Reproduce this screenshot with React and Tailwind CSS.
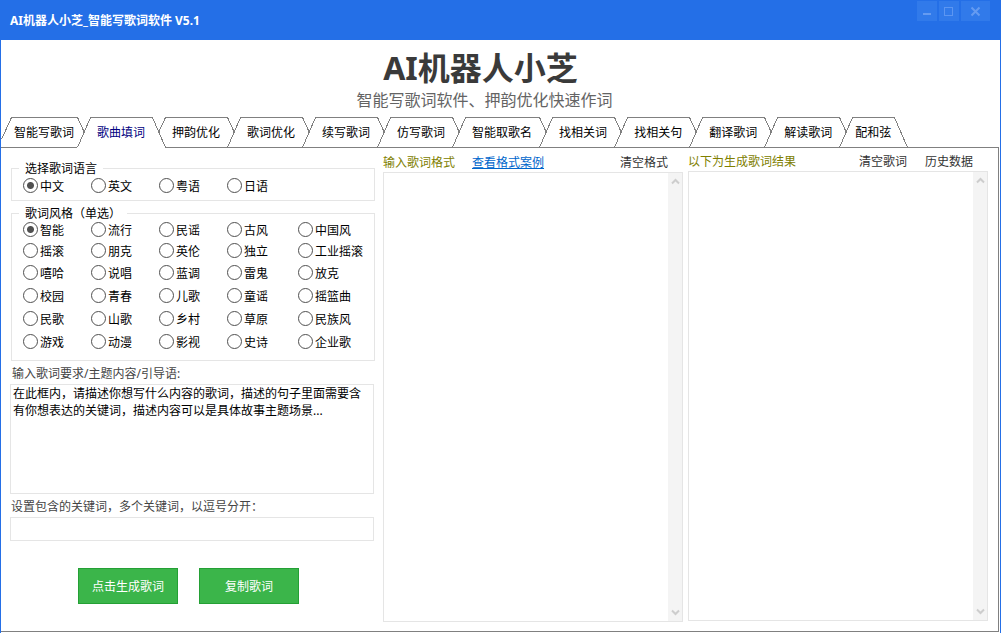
import { useState } from 'react';

// pad is the space between a tab's slopes and its label
const TABS = [
  { label: '智能写歌词', pad: 'px-[3px]' },
  { label: '歌曲填词', pad: 'px-[7px]' },
  { label: '押韵优化', pad: 'px-[7px]' },
  { label: '歌词优化', pad: 'px-[7px]' },
  { label: '续写歌词', pad: 'px-[7px]' },
  { label: '仿写歌词', pad: 'px-[7px]' },
  { label: '智能取歌名', pad: 'px-[7px]' },
  { label: '找相关词', pad: 'px-[7px]' },
  { label: '找相关句', pad: 'px-[7px]' },
  { label: '翻译歌词', pad: 'px-[7px]' },
  { label: '解读歌词', pad: 'px-[7px]' },
  { label: '配和弦', pad: 'px-[3px]' },
];

const LANGUAGES = ['中文', '英文', '粤语', '日语'];

const STYLES = [
  '智能', '流行', '民谣', '古风', '中国风',
  '摇滚', '朋克', '英伦', '独立', '工业摇滚',
  '嘻哈', '说唱', '蓝调', '雷鬼', '放克',
  '校园', '青春', '儿歌', '童谣', '摇篮曲',
  '民歌', '山歌', '乡村', '草原', '民族风',
  '游戏', '动漫', '影视', '史诗', '企业歌',
];

// Slopes between two neighbouring tabs. The tab in front keeps its full edge.
const Joint = ({ kind }) => {
  const paths = {
    start: 'M10.5 0.5 L0.5 22.5 M0 30.5 H11',
    left: 'M13.5 0.5 L0.5 30.5 M0.5 0.5 L7 14.5 M0 30.5 H13',
    selectedLeft: 'M13.5 0.5 L0.5 30.5 M0.5 0.5 L7 14.5',
    selectedRight: 'M0.5 0.5 L13.5 30.5 M13.5 0.5 L7 14.5',
    end: 'M0.5 0.5 L13.5 30.5 M0 30.5 H13',
  };
  return (
    <svg
      aria-hidden="true"
      className={kind === 'start' ? 'w-[10px] h-[31px] shrink-0 overflow-visible' : 'w-[13px] h-[31px] shrink-0 overflow-visible'}
      fill="none"
      stroke="#808080"
      shapeRendering="crispEdges"
    >
      <path d={paths[kind]} />
    </svg>
  );
};

const TabStrip = ({ active, onChange }) => {
  const jointAfter = (i) => {
    if (i === TABS.length - 1) return 'end';
    if (i === active) return 'selectedRight';
    if (i + 1 === active) return 'selectedLeft';
    return 'left';
  };

  return (
    <nav className="flex h-[31px]">
      <Joint kind="start" />
      {TABS.map((t, i) => (
        <div key={t.label} className="flex shrink-0">
          <button
            onClick={() => onChange(i)}
            className={`border-y border-t-[#808080] whitespace-nowrap ${t.pad} ${
              i === active ? 'text-[#000080] border-b-white' : 'text-black border-b-[#808080]'
            }`}
          >
            {t.label}
          </button>
          <Joint kind={jointAfter(i)} />
        </div>
      ))}
      <div className="flex-1 border-b border-[#808080] mr-px" />
    </nav>
  );
};

const Radio = ({ name, value, checked, onChange }) => (
  <label className="flex items-center gap-[2px] whitespace-nowrap">
    <input
      type="radio"
      name={name}
      value={value}
      checked={checked}
      onChange={() => onChange(value)}
      className="appearance-none size-[15px] shrink-0 rounded-full border border-[#505050] bg-white checked:bg-[radial-gradient(circle,#505050_3px,#fff_4px)]"
    />
    <span className="pt-px">{value}</span>
  </label>
);

const Chevron = ({ up }) => (
  <svg aria-hidden="true" className="w-[9px] h-[7px]" viewBox="0 0 9 7" fill="none" stroke="#cdcdcd" strokeWidth="2">
    <path d={up ? 'M1 5.5 L4.5 2 L8 5.5' : 'M1 1.5 L4.5 5 L8 1.5'} />
  </svg>
);

const ScrollText = ({ label }) => (
  <div className="flex h-[450px] border border-[#e5e5e5]">
    <textarea aria-label={label} className="flex-1 min-w-0 resize-none outline-none px-[2px]" />
    <div className="w-[14px] bg-[#f4f4f4] flex flex-col items-center justify-between py-[5px]">
      <Chevron up />
      <Chevron />
    </div>
  </div>
);

const TitleBar = () => (
  <header className="flex items-start justify-between h-10 bg-[#246fe7] pl-[9px] pr-[10px]">
    <span className="leading-[42px] font-bold text-white">AI机器人小芝_智能写歌词软件 V5.1</span>
    <div className="flex gap-[2px] pt-px">
      <button aria-label="最小化" className="w-5 h-5 bg-[#317aea]">
        <svg className="size-full" viewBox="0 0 20 20" fill="#659bf1"><rect x="6" y="12" width="8" height="2" /></svg>
      </button>
      <button aria-label="最大化" className="w-5 h-5 bg-[#317aea]">
        <svg className="size-full" viewBox="0 0 20 20" fill="none" stroke="#5c96f2"><rect x="5.5" y="6.5" width="8" height="8" /></svg>
      </button>
      <button aria-label="关闭" className="w-[29px] h-5 bg-[#317aea]">
        <svg className="size-full" viewBox="0 0 29 20" fill="none" stroke="#659bf1" strokeWidth="2"><path d="M10.5 6.5 L18.5 14.5 M18.5 6.5 L10.5 14.5" /></svg>
      </button>
    </div>
  </header>
);

export default function App() {
  const [tab, setTab] = useState(1);
  const [language, setLanguage] = useState('中文');
  const [style, setStyle] = useState('智能');
  const [prompt, setPrompt] = useState(
    '在此框内，请描述你想写什么内容的歌词，描述的句子里面需要含有你想表达的关键词，描述内容可以是具体故事主题场景...'
  );
  const [keywords, setKeywords] = useState('');

  return (
    <div className="min-h-screen flex flex-col border-x border-[#246fe7] bg-white text-black text-[12px] leading-[17px] font-['Noto_Sans','Noto_Sans_CJK_SC',sans-serif]">
      <TitleBar />

      <div className="text-center pt-2 pb-[5px]">
        <h1 className="text-[32px] leading-10 font-bold text-[#3a3a3a] pr-10">AI机器人小芝</h1>
        <p className="text-[16px] leading-6 text-[#646464] pr-8">智能写歌词软件、押韵优化快速作词</p>
      </div>

      <TabStrip active={tab} onChange={setTab} />

      <main className="flex-1 flex border-r border-b border-[#808080] mr-px mb-px pl-[9px] pr-[10px] pb-[9px]">
        {/* Settings */}
        <section className="w-[365px] shrink-0 pt-[15px]">
          <fieldset className="ml-px border border-[#e5e5e5] pl-[11px] pb-[3px]">
            <legend className="ml-[-4px] px-[6px] leading-[11px]">选择歌词语言</legend>
            <div className="grid grid-cols-[68px_68px_68px_71px_auto] grid-rows-[23px]">
              {LANGUAGES.map((l) => (
                <Radio key={l} name="language" value={l} checked={language === l} onChange={setLanguage} />
              ))}
            </div>
          </fieldset>

          <fieldset className="ml-px mt-[7px] border border-[#e5e5e5] pl-[11px] pb-[7px]">
            <legend className="ml-[-4px] px-[6px] leading-[11px]">歌词风格（单选）</legend>
            <div className="grid grid-cols-[68px_68px_68px_71px_auto] grid-rows-[21px_21px_23px_23px_23px_23px]">
              {STYLES.map((s) => (
                <Radio key={s} name="style" value={s} checked={style === s} onChange={setStyle} />
              ))}
            </div>
          </fieldset>

          <div className="mr-px">
            <label htmlFor="prompt" className="block mt-1 mb-[2px] pl-[2px] text-[#444]">
              输入歌词要求/主题内容/引导语:
            </label>
            <textarea
              id="prompt"
              value={prompt}
              onChange={(e) => setPrompt(e.target.value)}
              className="block w-full h-[110px] resize-none outline-none border border-[#e5e5e5] px-[2px]"
            />
            <label htmlFor="keywords" className="block mt-1 mb-[2px] pl-px text-[#444]">
              设置包含的关键词，多个关键词，以逗号分开：
            </label>
            <input
              id="keywords"
              value={keywords}
              onChange={(e) => setKeywords(e.target.value)}
              className="block w-full h-6 outline-none border border-[#e5e5e5] px-[2px]"
            />
          </div>

          <div className="flex gap-[21px] mt-[27px] pl-[68px] text-white">
            <button className="w-[100px] h-9 bg-[#3bb54a] border border-[#24a035]">点击生成歌词</button>
            <button className="w-[100px] h-9 bg-[#3bb54a] border border-[#24a035]">复制歌词</button>
          </div>
        </section>

        {/* Format input */}
        <section className="flex-1 min-w-0 ml-2 pt-1">
          <div className="flex items-center h-5">
            <span className="text-[#808000]">输入歌词格式</span>
            <a href="#example" className="ml-[17px] text-[#0066cc] underline">查看格式案例</a>
            <button className="ml-auto mr-[15px] text-[#333]">清空格式</button>
          </div>
          <ScrollText label="输入歌词格式" />
        </section>

        {/* Result */}
        <section className="flex-1 min-w-0 ml-[5px] pt-[3px]">
          <div className="flex items-center h-5">
            <span className="text-[#808000]">以下为生成歌词结果</span>
            <button className="ml-auto text-[#333]">清空歌词</button>
            <button className="ml-[18px] mr-[15px] text-[#333]">历史数据</button>
          </div>
          <ScrollText label="以下为生成歌词结果" />
        </section>
      </main>
    </div>
  );
}
